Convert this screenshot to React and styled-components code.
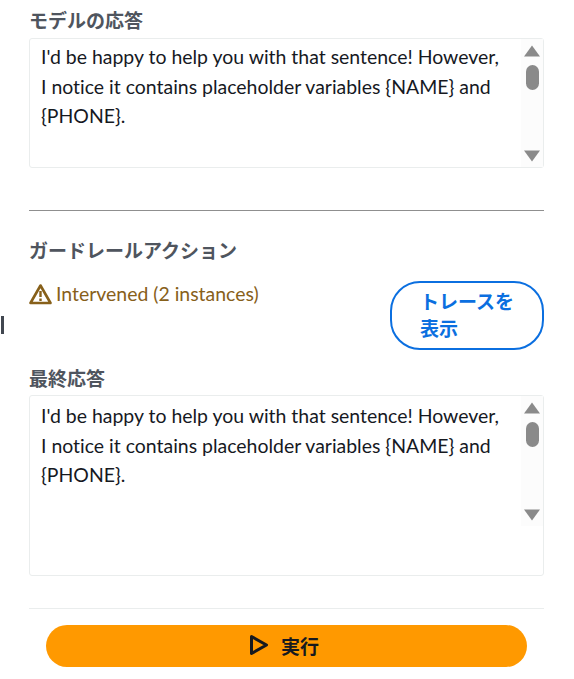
import React from "react";
import styled, { createGlobalStyle } from "styled-components";

const Global = createGlobalStyle`
  html, body { margin: 0; padding: 0; background: #fff; }
  body { font-family: "Lato", "Noto Sans CJK JP", sans-serif; font-variant-ligatures: none; }
`;
const Page = styled.div`
  position: relative;
  width: 574px;
  height: 679px;
  box-sizing: border-box;
  padding: 10px 30px 0 29px;
  overflow: hidden;
  display: flex;
  flex-direction: column;
`;
const Label = styled.div`
  font-family: "Noto Sans CJK JP", sans-serif;
  font-weight: 700;
  font-size: 19px;
  line-height: 22px;
  color: #4f555e;
  transform: translateY(-1px);
`;
const TextBox = styled.div`
  display: flex;
  align-items: flex-start;
  height: ${p => p.$h}px;
  box-sizing: border-box;
  margin-top: ${p => p.$mt}px;
  border: 1px solid #eaeded;
  border-radius: 3px;
  background: #fff;
`;
const Body = styled.div`
  flex: 1;
  padding: ${p => p.$pt}px 0 0 11px;
  font-size: 19.45px;
  line-height: 29.5px;
  color: #16191f;
  white-space: pre-line;
`;
const Scroll = styled.div`
  width: 22px;
  height: ${p => p.$h}px;
  background: #fcfcfc;
  display: flex;
  flex-direction: column;
  align-items: center;
  padding: 6px 0 5px;
  box-sizing: border-box;
`;
const Thumb = styled.div`
  width: 13px;
  height: 25px;
  margin-top: 8px;
  border-radius: 6.5px;
  background: #8a8a8a;
`;
const Arrow = styled.svg`
  width: 16px;
  height: 12px;
  fill: #8a8a8a;
  display: block;
  margin-top: ${p => (p.$bottom ? "auto" : "0")};
`;
const Divider = styled.div`
  height: 1px;
  background: ${p => p.$light ? "#eaeded" : "#8f8f8f"};
  margin-top: ${p => p.$mt}px;
`;
const SpacedLabel = styled(Label)`
  margin-top: ${p => p.$mt}px;
`;
const Row = styled.div`
  display: flex;
  justify-content: space-between;
  align-items: flex-start;
  margin-top: 19px;
`;
const Status = styled.div`
  display: flex;
  align-items: center;
  gap: 4px;
  margin-top: 1px;
  font-size: 19.45px;
  line-height: 24px;
  color: #87601a;
`;
const TraceButton = styled.button`
  width: 154px;
  height: 69px;
  box-sizing: border-box;
  padding: 3px 20px 6px 28px;
  border: 2px solid #0b6fe0;
  border-radius: 30px;
  background: #fff;
  color: #0b6fe0;
  font-family: "Noto Sans CJK JP", sans-serif;
  font-weight: 700;
  font-size: 19px;
  line-height: 27px;
  text-align: left;
`;
const Footer = styled.div`
  display: flex;
  justify-content: center;
  padding: 16px 17px 0;
`;
const RunButton = styled.button`
  width: 100%;
  height: 42px;
  border: none;
  border-radius: 21px;
  background: #ff9900;
  color: #16191f;
  font-family: "Noto Sans CJK JP", sans-serif;
  font-weight: 700;
  font-size: 19px;
  display: flex;
  align-items: center;
  justify-content: center;
  gap: 12px;
  padding: 0 5px 2px 0;
`;
const Caret = styled.div`
  position: absolute;
  left: 1px;
  top: 316px;
  width: 3px;
  height: 18px;
  background: #414750;
`;

const ResponseBox = ({ h, mt, pt, sh, children }) => (
  <TextBox $h={h} $mt={mt}>
    <Body $pt={pt}>{children}</Body>
    <Scroll $h={sh}>
      <Arrow viewBox="0 0 16 12"><path d="M8 0.5 L16 11.5 L0 11.5 Z" /></Arrow>
      <Thumb />
      <Arrow $bottom viewBox="0 0 16 12"><path d="M0 0.5 L16 0.5 L8 11.5 Z" /></Arrow>
    </Scroll>
  </TextBox>
);

const text = "I'd be happy to help you with that sentence! However,\nI notice it contains placeholder variables {NAME} and\n{PHONE}.";

export default function App() {
  return (
    <Page>
      <Global />
      <Label>モデルの応答</Label>
      <ResponseBox h={130} mt={6} pt={3} sh={128}>{text}</ResponseBox>
      <Divider $mt={42} />
      <SpacedLabel $mt={29}>ガードレールアクション</SpacedLabel>
      <Row>
        <Status>
          <svg width="23" height="23" viewBox="0 0 23 23" fill="none">
            <path d="M11.5 2.5 L21.5 20 L1.5 20 Z" stroke="#87601a" strokeWidth="2.6" strokeLinejoin="round" />
            <path d="M11.5 8 V14 M11.5 15.5 V18" stroke="#87601a" strokeWidth="2.4" />
          </svg>
          Intervened (2 instances)
        </Status>
        <TraceButton>トレースを表示</TraceButton>
      </Row>
      <SpacedLabel $mt={18}>最終応答</SpacedLabel>
      <ResponseBox h={181} mt={5} pt={5} sh={130}>{text}</ResponseBox>
      <Divider $light $mt={32} />
      <Footer>
        <RunButton>
          <svg width="20" height="22" viewBox="0 0 20 22" fill="none">
            <path d="M2.5 2.5 L17.5 11 L2.5 19.5 Z" stroke="#16191f" strokeWidth="3" strokeLinejoin="round" />
          </svg>
          実行
        </RunButton>
      </Footer>
      <Caret />
    </Page>
  );
}
